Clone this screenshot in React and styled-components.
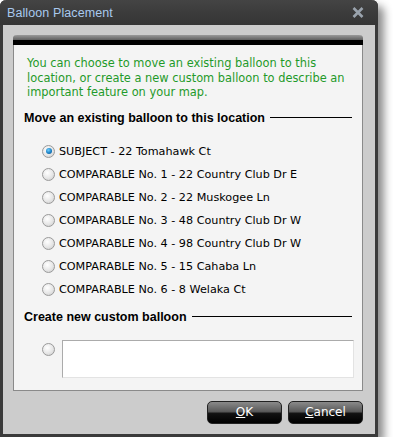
import React from "react";
import styled, { createGlobalStyle } from "styled-components";

const Global = createGlobalStyle`
  html, body { margin: 0; padding: 0; background: #ffffff; }
  body { font-family: "DejaVu Sans", "Liberation Sans", sans-serif; }
`;

const Window = styled.div`
  width: 372px;
  margin: 0;
  border: 3px solid #3a3a3a;
  border-top: none;
  border-radius: 6px 6px 0 0;
  background: #cccccc;
  box-shadow: 6px 6px 8px rgba(0, 0, 0, 0.45);
  display: flex;
  flex-direction: column;
`;

const TitleBar = styled.div`
  height: 25px;
  margin: 0 -3px;
  padding: 0 14px 0 7px;
  border-radius: 6px 6px 0 0;
  background: linear-gradient(#444 0%, #3a3a3a 60%, #353535 100%);
  display: flex;
  align-items: center;
  justify-content: space-between;
`;

const Title = styled.span`
  color: #a9c9ee;
  font-family: "Liberation Sans", Arial, sans-serif;
  font-size: 12.5px;
  letter-spacing: 0.1px;
`;

const Body = styled.div`
  padding: 10px 12px 10px 10px;
  display: flex;
  flex-direction: column;
`;

const Panel = styled.div`
  border: 1px solid #8a8a8a;
  border-top: none;
  border-radius: 4px 4px 0 0;
  background: #f4f4f4;
  display: flex;
  flex-direction: column;
`;

const PanelHeader = styled.div`
  height: 10px;
  margin: 0 -1px;
  border-radius: 4px 4px 0 0;
  background: linear-gradient(#9a9a9a 0%, #666 45%, #000 50%, #000 100%);
`;

const Content = styled.div`
  padding: 11px 10px 12px 10px;
  display: flex;
  flex-direction: column;
`;

const Intro = styled.p`
  margin: 0 0 0 3px;
  color: #1f9a2a;
  font-size: 11.4px;
  line-height: 14.5px;
`;

const Heading = styled.div`
  margin-top: ${(p) => p.$top}px;
  display: flex;
  align-items: center;
  gap: 5px;
  height: 16px;
  color: #000;
  font-family: "Liberation Sans", Arial, sans-serif;
  font-weight: bold;
  font-size: 12.5px;
  white-space: nowrap;
  &::after {
    content: "";
    flex: 1;
    height: 1.5px;
    background: #000;
  }
`;

const List = styled.div`
  margin-top: 14px;
  padding-left: 18px;
  display: flex;
  flex-direction: column;
`;

const Row = styled.label`
  height: 23px;
  display: flex;
  align-items: center;
  gap: 4px;
  font-size: 11.2px;
  color: #000;
`;

const Radio = styled.span`
  width: 11px;
  height: 11px;
  border-radius: 50%;
  border: 1px solid #9a9a9a;
  background: radial-gradient(circle at 40% 35%, #fff 0%, #e6e6e6 55%, #c8c8c8 100%);
  display: flex;
  align-items: center;
  justify-content: center;
  flex-shrink: 0;
  &::after {
    content: "";
    display: ${(p) => (p.$checked ? "block" : "none")};
    width: 6px;
    height: 6px;
    border-radius: 50%;
    background: radial-gradient(circle at 40% 35%, #6fd0ff 0%, #1a7fc4 55%, #0b4f86 100%);
  }
`;

const CustomRow = styled.div`
  margin-top: 15px;
  padding-left: 18px;
  display: flex;
  align-items: flex-start;
  gap: 7px;
`;

const RadioWrap = styled.div`
  padding-top: 3px;
`;

const TextBox = styled.div`
  flex: 1;
  height: 36px;
  margin-right: -2px;
  background: #fff;
  border: 1px solid #ababab;
  border-bottom-color: #e3e3e3;
  border-right-color: #e3e3e3;
`;

const Buttons = styled.div`
  margin-top: 10px;
  display: flex;
  justify-content: flex-end;
  gap: 6px;
`;

const Button = styled.button`
  width: 75px;
  height: 23px;
  border-radius: 5px;
  border: 1px solid #222;
  background: linear-gradient(#8a8a8a 0%, #5a5a5a 45%, #111 55%, #000 100%);
  color: #fff;
  font-family: "DejaVu Sans", "Liberation Sans", sans-serif;
  font-size: 12px;
  padding: 0;
  u { text-decoration: underline; }
`;

const items = [
  "SUBJECT - 22 Tomahawk Ct",
  "COMPARABLE No. 1 - 22 Country Club Dr E",
  "COMPARABLE No. 2 - 22 Muskogee Ln",
  "COMPARABLE No. 3 - 48 Country Club Dr W",
  "COMPARABLE No. 4 - 98 Country Club Dr W",
  "COMPARABLE No. 5 - 15 Cahaba Ln",
  "COMPARABLE No. 6 - 8 Welaka Ct",
];

export default function App() {
  return (
    <>
      <Global />
      <Window>
        <TitleBar>
          <Title>Balloon Placement</Title>
          <svg width="12" height="11" viewBox="0 0 12 11">
            <path d="M1.5 1 L10.5 10 M10.5 1 L1.5 10" stroke="#9aa3ad" strokeWidth="2.6" />
          </svg>
        </TitleBar>
        <Body>
          <Panel>
            <PanelHeader />
            <Content>
              <Intro>
                You can choose to move an existing balloon to this location, or create a new custom balloon to describe an important feature on your map.
              </Intro>
              <Heading $top={10}>Move an existing balloon to this location</Heading>
              <List>
                {items.map((t, i) => (
                  <Row key={t}>
                    <Radio $checked={i === 0} />
                    {t}
                  </Row>
                ))}
              </List>
              <Heading $top={8}>Create new custom balloon</Heading>
              <CustomRow>
                <RadioWrap>
                  <Radio />
                </RadioWrap>
                <TextBox />
              </CustomRow>
            </Content>
          </Panel>
          <Buttons>
            <Button><u>O</u>K</Button>
            <Button><u>C</u>ancel</Button>
          </Buttons>
        </Body>
      </Window>
    </>
  );
}
